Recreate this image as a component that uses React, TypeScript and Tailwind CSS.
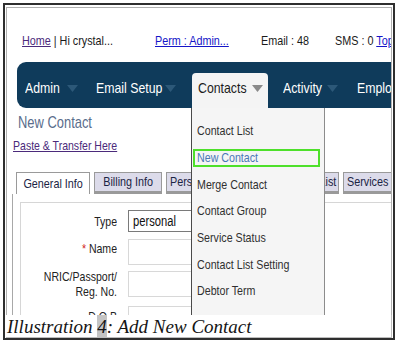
import React from "react";

const sans = "font-['Liberation_Sans',Arial,sans-serif]";

function Arrow({ color }: { color: string }) {
  return (
    <svg width="11" height="7" viewBox="0 0 11 7" className="shrink-0">
      <polygon points="0,0 11,0 5.5,7" fill={color} />
    </svg>
  );
}

/* text squeezed horizontally like the reference (narrow rendering) */
function L({ children, cls = "origin-left scale-x-[0.82]" }: { children: React.ReactNode; cls?: string }) {
  return <span className={`inline-block whitespace-nowrap ${cls}`}>{children}</span>;
}

function NavItem({
  label,
  w,
  textW,
  pl,
  gap,
  arrow,
  active,
}: {
  label: string;
  w: string;
  textW: string;
  pl: string;
  gap: string;
  arrow?: string;
  active?: boolean;
}) {
  return (
    <div
      className={`h-[35px] shrink-0 pt-[7px] flex items-start ${w} ${pl} ${
        active ? "bg-[#f4f4f4] rounded-t-[4px] text-[#1c1c1c]" : "text-white"
      }`}
    >
      <span className={`shrink-0 ${textW}`}>
        <L>{label}</L>
      </span>
      {arrow && (
        <span className={`mt-[5px] ${gap}`}>
          <Arrow color={arrow} />
        </span>
      )}
    </div>
  );
}

export default function App() {
  const menu = [
    "Contact List",
    "New Contact",
    "Merge Contact",
    "Contact Group",
    "Service Status",
    "Contact List Setting",
    "Debtor Term",
  ];
  return (
    <div className={`w-[397px] h-[345px] bg-white pt-[3px] pl-[3px] ${sans}`}>
      <div className="w-[392px] h-[337px] border-2 border-[#2e2e2e] flex flex-col">
        <div className="ml-px mr-px mt-[2px] h-[308px] border-t border-l border-r border-[#b0b0b0] overflow-hidden relative bg-white">
          {/* top row */}
          <div className="pt-[25px] pl-[15px] flex h-[41px] text-[13.5px] leading-[16px] text-[#1a1a1a] whitespace-nowrap">
            <div className="w-[133px] shrink-0">
              <L cls="origin-left scale-x-[0.8]">
                <span className="underline text-[#4b2a7b]">Home</span> | Hi crystal...
              </L>
            </div>
            <div className="w-[106px] shrink-0">
              <L cls="origin-left scale-x-[0.8]">
                <span className="underline text-[#1515c8]">Perm : Admin...</span>
              </L>
            </div>
            <div className="w-[74px] shrink-0">
              <L cls="origin-left scale-x-[0.8]">Email : 48</L>
            </div>
            <div className="shrink-0">
              <L cls="origin-left scale-x-[0.8]">
                SMS : 0 <span className="underline text-[#1515c8]">Top</span>
              </L>
            </div>
          </div>

          {/* nav bar */}
          <div className="mt-[13px] ml-[10px] h-[46px] w-[430px] rounded-l-[9px] bg-[#0f3b5b] flex items-end text-[15px] leading-[16px] whitespace-nowrap">
            <NavItem label="Admin" w="w-[79px]" pl="pl-[8px]" textW="w-[34px]" gap="ml-[8px]" arrow="#2c5878" />
            <NavItem label="Email Setup" w="w-[96px]" pl="pl-0" textW="w-[64px]" gap="ml-[5px]" arrow="#2c5878" />
            <NavItem label="Contacts" w="w-[76px]" pl="pl-[6px]" textW="w-[48px]" gap="ml-[6px]" arrow="#8a8a8a" active />
            <NavItem label="Activity" w="w-[89px]" pl="pl-[15px]" textW="w-[38px]" gap="ml-[6px]" arrow="#2c5878" />
            <NavItem label="Employee" w="w-[80px]" pl="pl-0" textW="w-[60px]" gap="ml-0" />
          </div>

          {/* heading */}
          <div className="mt-[5px] ml-[11px] text-[17px] leading-[19px] text-[#5a6d8c]">
            <L cls="origin-left scale-x-[0.76]">New Contact</L>
          </div>
          <div className="mt-[6px] ml-[6px] text-[13px] leading-[16px] text-[#4b2a7b]">
            <L cls="origin-left scale-x-[0.81] underline">Paste &amp; Transfer Here</L>
          </div>

          {/* tabs */}
          <div className="mt-[18px] ml-[9px] flex items-end gap-[4px] text-[13.5px] leading-[16px] text-[#1b2444] whitespace-nowrap">
            <div className="w-[74px] shrink-0 h-[22px] border border-b-0 border-[#9a9a9a] bg-white flex items-center justify-center">
              <L cls="origin-center scale-x-[0.8]">General Info</L>
            </div>
            <div className="w-[68px] shrink-0 h-[22px] border border-[#9a9a9a] border-b-[3px] bg-[#dcdbea] flex items-center justify-center">
              <L cls="origin-center scale-x-[0.8]">Billing Info</L>
            </div>
            <div className="w-[80px] shrink-0 h-[22px] border border-[#9a9a9a] border-b-[3px] bg-[#dcdbea] flex items-center pl-[3px]">
              <L cls="origin-left scale-x-[0.8]">Personal Info</L>
            </div>
            <div className="w-[89px] shrink-0 h-[22px] border border-[#9a9a9a] border-b-[3px] bg-[#dcdbea] flex items-center justify-end pr-[2px]">
              <L cls="origin-right scale-x-[0.8]">Contact List</L>
            </div>
            <div className="w-[56px] shrink-0 h-[22px] border border-[#9a9a9a] border-b-[3px] bg-[#dcdbea] flex items-center pl-[3px]">
              <L cls="origin-left scale-x-[0.8]">Services</L>
            </div>
          </div>

          {/* panel */}
          <div className="ml-[5px] border-l border-[#a8a8a8] pl-[7px] pt-[8px] h-[140px]">
            <div className="border-l border-t border-[#d6d6d6] h-full pt-[7px] text-[13.5px] leading-[15px] text-[#222]">
              <div className="flex items-center">
                <div className="w-[96px] shrink-0 text-right origin-right scale-x-[0.78] whitespace-nowrap">Type</div>
                <div className="ml-[11px] w-[100px] shrink-0 h-[22px] border border-[#7a7a7a] pl-[4px] flex items-center text-[14px] text-[#111]">
                  <L cls="origin-left scale-x-[0.8]">personal</L>
                </div>
              </div>
              <div className="flex items-start mt-[7px]">
                <div className="w-[96px] shrink-0 text-right pt-[2px] origin-right scale-x-[0.78] whitespace-nowrap">
                  <span className="text-[#d02020]">*</span> Name
                </div>
                <div className="ml-[11px] w-[100px] shrink-0 h-[26px] border border-[#d8d8d8]" />
              </div>
              <div className="flex items-center mt-[4px]">
                <div className="w-[96px] shrink-0 text-right origin-right scale-x-[0.78] whitespace-nowrap">
                  NRIC/Passport/
                  <br />
                  Reg. No.
                </div>
                <div className="ml-[11px] w-[100px] shrink-0 h-[26px] border border-[#d8d8d8]" />
              </div>
              <div className="flex items-start mt-[7px]">
                <div className="w-[96px] shrink-0 text-right pt-[3px] origin-right scale-x-[0.78] whitespace-nowrap">D.O.B</div>
                <div className="ml-[11px] w-[100px] shrink-0 h-[26px] border border-[#d8d8d8]" />
              </div>
            </div>
          </div>

          {/* dropdown menu */}
          <div className="absolute left-[184px] top-[100px] w-[134px] h-[220px] bg-[#f5f5f5] border-l border-[#4a4a4a] border-r border-r-[#8c8c8c] pt-[10px] text-[13.5px] leading-[16px] text-[#303030] whitespace-nowrap">
            {menu.map((m, i) =>
              i === 1 ? (
                <div key={m} className="h-[26.7px] flex items-center">
                  <div className="ml-[1px] w-[127px] h-[18px] border-2 border-[#4ee02b] pl-[2px] flex items-center text-[#4a78b5]">
                    <L cls="origin-left scale-x-[0.79]">{m}</L>
                  </div>
                </div>
              ) : (
                <div key={m} className="h-[26.7px] flex items-center pl-[5px]">
                  <L cls="origin-left scale-x-[0.79]">{m}</L>
                </div>
              )
            )}
          </div>
        </div>

        {/* caption */}
        <div className="ml-px mr-px h-[23px] border-r border-b border-[#bdbdbd] bg-white pl-px flex items-center font-['Liberation_Serif',serif] italic text-[19px] leading-[23px] text-[#151515] whitespace-nowrap overflow-hidden">
          <span>Illustration&nbsp;</span>
          <span className="bg-[#c4c4c4]">4</span>
          <span>: Add New Contact</span>
        </div>
      </div>
    </div>
  );
}
